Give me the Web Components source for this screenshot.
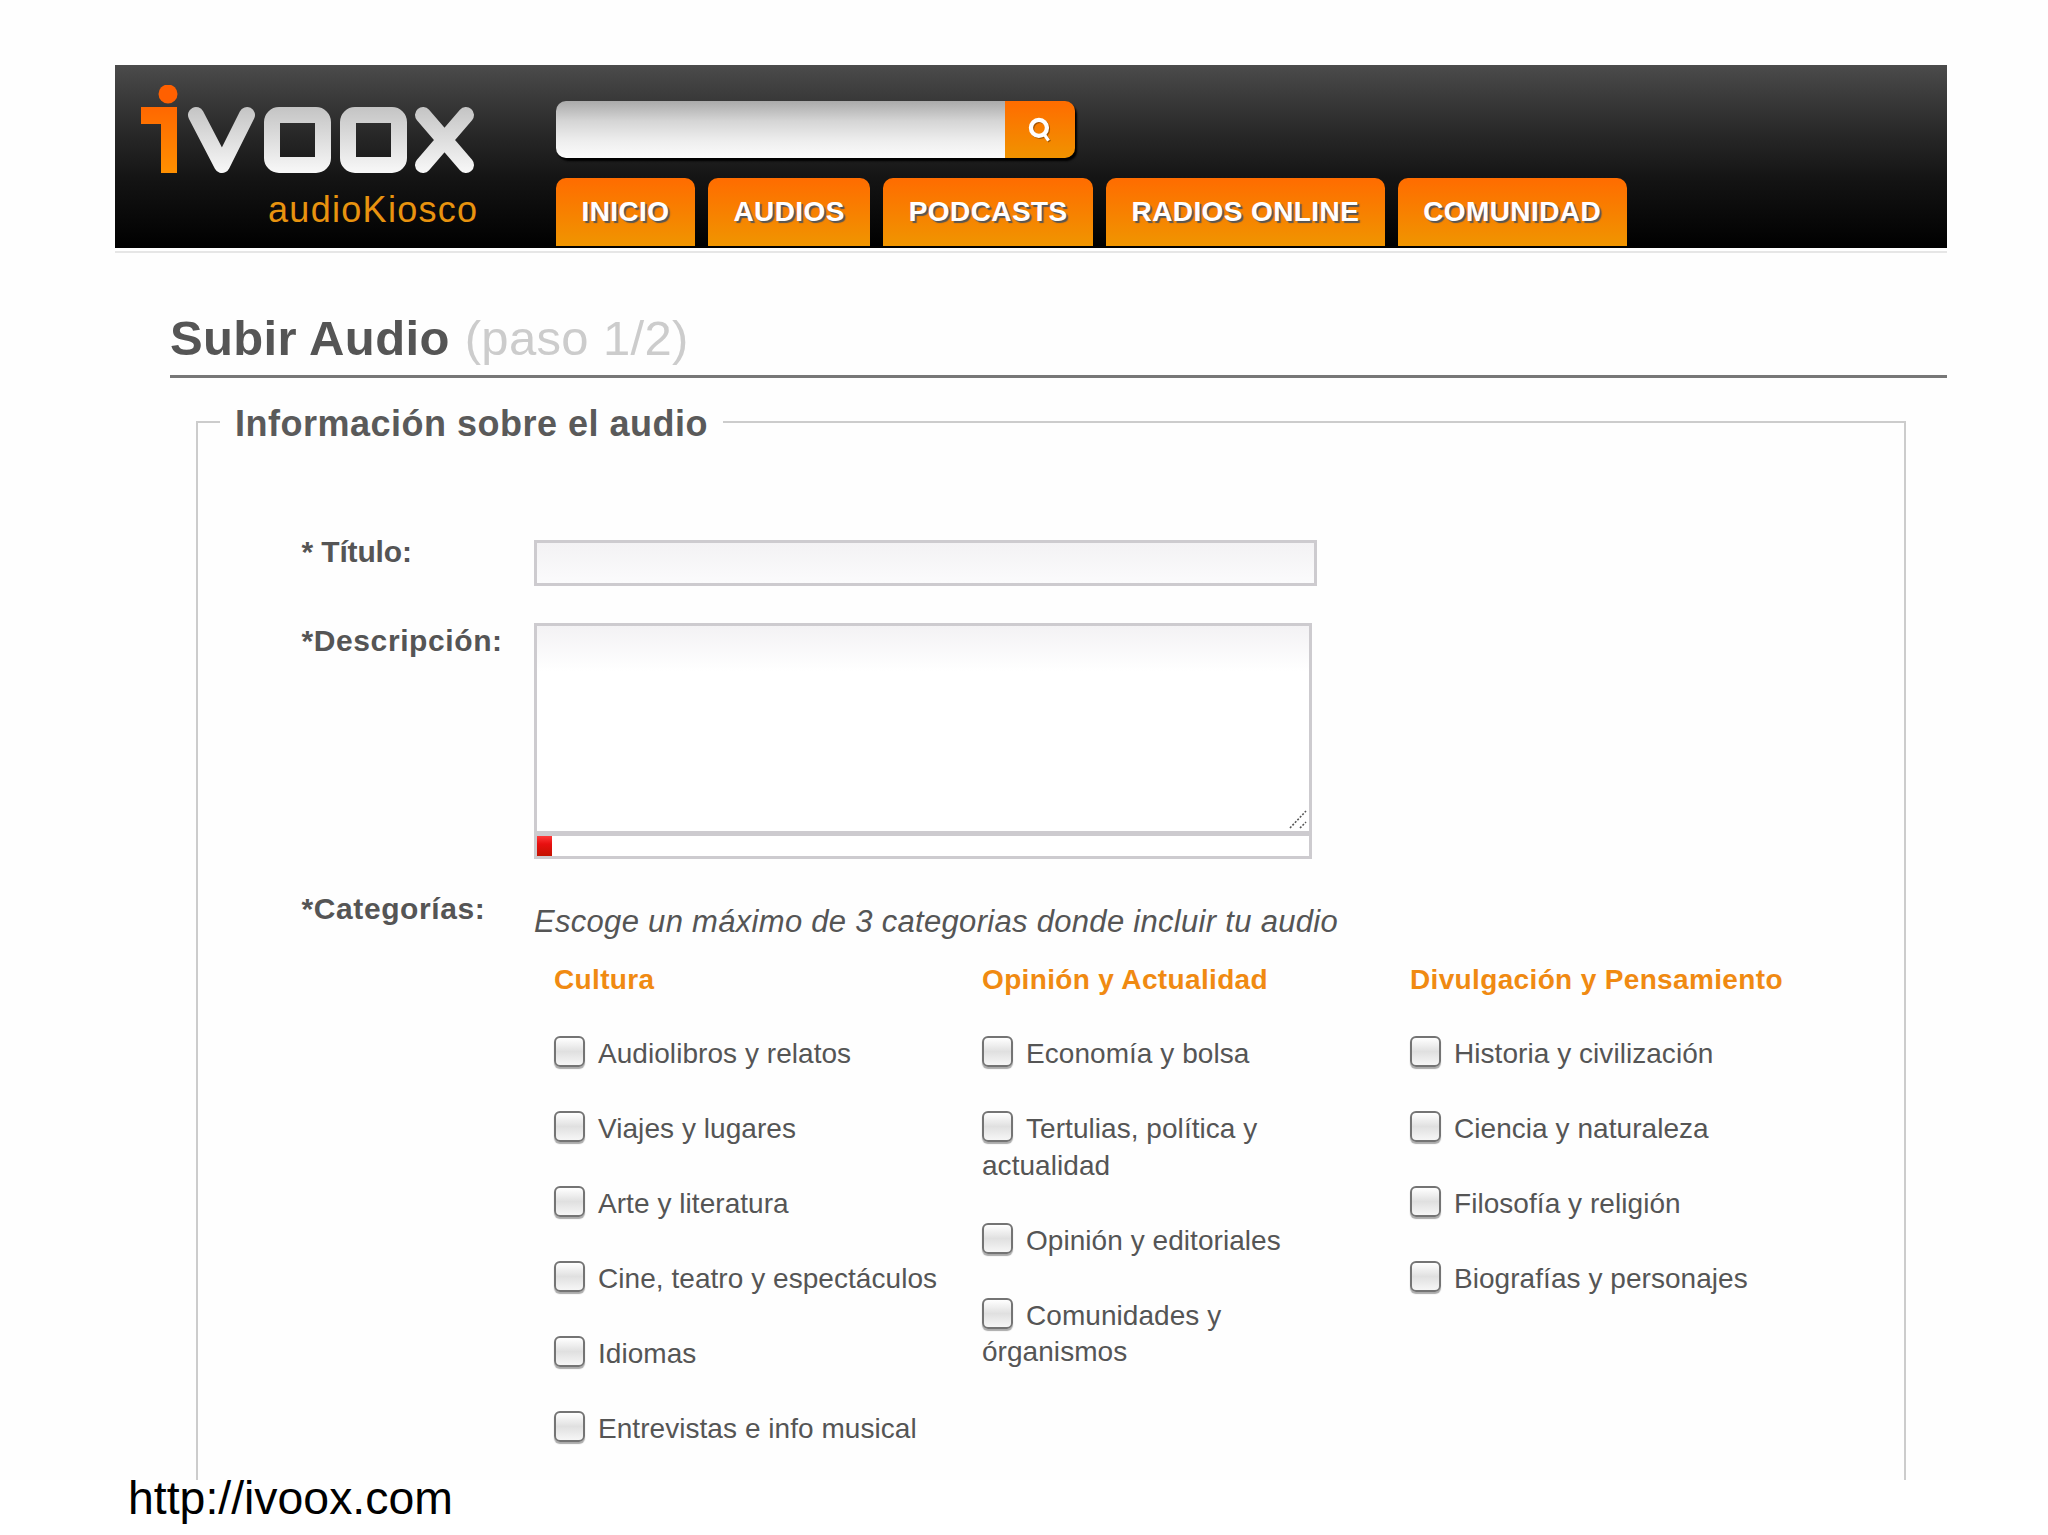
<!DOCTYPE html>
<html lang="es">
<head>
<meta charset="utf-8">
<title>iVoox</title>
<style>
html,body{margin:0;padding:0;background:#fff;font-family:"Liberation Sans",Arial,sans-serif;}
</style>
</head>
<body>
<iv-slide>
  <iv-header></iv-header>
  <iv-title step="(paso 1/2)">Subir Audio</iv-title>
  <iv-panel legend="Información sobre el audio">
    <iv-field label="* Título:" class="short"><iv-text-input></iv-text-input></iv-field>
    <iv-field label="*Descripción:"><iv-description></iv-description></iv-field>
    <iv-field label="*Categorías:" class="last">
      <iv-hint>Escoge un máximo de 3 categorias donde incluir tu audio</iv-hint>
      <iv-categories>
        <iv-category heading="Cultura">
          <iv-check>Audiolibros y relatos</iv-check>
          <iv-check>Viajes y lugares</iv-check>
          <iv-check>Arte y literatura</iv-check>
          <iv-check>Cine, teatro y espectáculos</iv-check>
          <iv-check>Idiomas</iv-check>
          <iv-check>Entrevistas e info musical</iv-check>
        </iv-category>
        <iv-category heading="Opinión y Actualidad">
          <iv-check>Economía y bolsa</iv-check>
          <iv-check>Tertulias, política y actualidad</iv-check>
          <iv-check>Opinión y editoriales</iv-check>
          <iv-check>Comunidades y órganismos</iv-check>
        </iv-category>
        <iv-category heading="Divulgación y Pensamiento">
          <iv-check>Historia y civilización</iv-check>
          <iv-check>Ciencia y naturaleza</iv-check>
          <iv-check>Filosofía y religión</iv-check>
          <iv-check>Biografías y personajes</iv-check>
        </iv-category>
      </iv-categories>
    </iv-field>
  </iv-panel>
  <iv-caption slot="caption">http://ivoox.com</iv-caption>
</iv-slide>
<script>
function def(name, css, html, init){
  customElements.define(name, class extends HTMLElement{
    connectedCallback(){
      if(this.shadowRoot) return;
      const r=this.attachShadow({mode:'open'});
      const h=typeof html==='function'?html(this):html;
      r.innerHTML='<style>'+css+'</style>'+h;
      if(init) init(this,r);
    }
  });
}
def('iv-slide',`
  :host{display:flex;flex-direction:column;width:2048px;height:1535px;overflow:hidden;background:#fff;box-sizing:border-box;}
  .main{height:1480px;overflow:hidden;padding-top:65px;box-sizing:border-box;flex:none;background:#fefefe;}
`,`<div class="main"><slot></slot></div><slot name="caption"></slot>`);

def('iv-header',`
  :host{display:flex;width:1832px;height:183px;margin-left:115px;box-sizing:border-box;padding-left:26px;background:linear-gradient(#4b4b4b,#2a2a2a 35%,#141414 62%,#000 100%);box-shadow:0 3px 0 #fff,0 5px 0 #e6e6e6;}
  .brand{width:415px;flex:none;display:flex;flex-direction:column;padding-top:20px;box-sizing:border-box;}
  svg.logo{display:block;width:335px;height:90px;}
  .sub{font:36px/34px "Liberation Sans",sans-serif;color:#e8930f;margin:18px 0 0 127px;letter-spacing:1.3px;white-space:nowrap;}
  .right{display:flex;flex-direction:column;padding-top:36px;gap:20px;}
  .search{display:flex;width:519px;height:57px;border-radius:10px;box-shadow:2px 3px 2px #000;}
  .q{width:449px;background:linear-gradient(#aaa,#d5d5d5 35%,#eee 70%,#fbfbfb);border-radius:10px 0 0 10px;}
  .go{width:70px;display:flex;align-items:center;justify-content:center;background:linear-gradient(#ff6c00,#f09300);border-radius:0 10px 10px 0;}
  nav{display:flex;gap:13px;}
`,`<div class="brand">
  <svg class="logo" viewBox="141 85 335 90" role="img" aria-label="ivoox">
    <defs>
      <linearGradient id="o" gradientUnits="userSpaceOnUse" x1="0" y1="85" x2="0" y2="173"><stop offset="0" stop-color="#ff5a00"/><stop offset="1" stop-color="#ff9000"/></linearGradient>
      <linearGradient id="w" gradientUnits="userSpaceOnUse" x1="0" y1="107" x2="0" y2="173"><stop offset="0" stop-color="#c4c4c4"/><stop offset="1" stop-color="#f8f8f8"/></linearGradient>
    </defs>
    <circle cx="168" cy="94" r="9.5" fill="#ff6000"/>
    <path d="M141 107H177V173H161V124H141Z" fill="url(#o)"/>
    <path d="M196 115L222 165L247 115" fill="none" stroke="url(#w)" stroke-width="16" stroke-linecap="round" stroke-linejoin="round"/>
    <rect x="272" y="115" width="51" height="50" rx="7" fill="none" stroke="url(#w)" stroke-width="16"/>
    <rect x="348" y="115" width="51" height="50" rx="7" fill="none" stroke="url(#w)" stroke-width="16"/>
    <path d="M423 115L466 165M466 115L423 165" fill="none" stroke="url(#w)" stroke-width="16" stroke-linecap="round"/>
  </svg>
  <div class="sub">audioKiosco</div>
</div>
<div class="right">
  <div class="search"><div class="q"></div><div class="go">
    <svg width="30" height="32" viewBox="0 0 28 30" aria-hidden="true">
      <g fill="none" stroke="#5a3000" stroke-opacity=".55" transform="translate(1 1)"><circle cx="13" cy="13" r="7.5" stroke-width="4"/><path d="M18 19L22 25" stroke-width="3"/></g>
      <g fill="none" stroke="#fff"><circle cx="13" cy="13" r="7.5" stroke-width="4"/><path d="M18 19L22 25" stroke-width="3"/></g>
    </svg></div></div>
  <nav>
    <iv-tab>INICIO</iv-tab><iv-tab>AUDIOS</iv-tab><iv-tab>PODCASTS</iv-tab><iv-tab>RADIOS ONLINE</iv-tab><iv-tab>COMUNIDAD</iv-tab>
  </nav>
</div>`);

def('iv-tab',`
  :host{display:flex;align-items:center;height:68px;padding:0 25.5px;box-sizing:border-box;border-radius:10px 10px 0 0;background:linear-gradient(#ff6c00,#f09500);color:#fff;font:bold 28px/1 "Liberation Sans",sans-serif;letter-spacing:.4px;text-shadow:2px 2px 1px #555;white-space:nowrap;}
`,`<slot></slot>`);

def('iv-title',`
  :host{display:block;margin:0 0 0 170px;width:1777px;}
  h1{margin:0;padding:62px 0 9px;border-bottom:3px solid #777;font:bold 49px/56px "Liberation Sans",sans-serif;color:#555;letter-spacing:.35px;}
  span{font-weight:normal;color:#ccc;margin-left:1px;}
`,t=>`<h1><slot></slot> <span>${t.getAttribute('step')}</span></h1>`);

def('iv-panel',`
  :host{display:block;margin:20px 0 0 196px;width:1710px;}
  fieldset{margin:0;padding:95px 0 100px 103.5px;border:2px solid #ccc;min-height:1100px;box-sizing:border-box;}
  legend{margin-left:-81.5px;padding:5px 15px 0;font:bold 36px/42px "Liberation Sans",sans-serif;color:#5a5a5a;letter-spacing:.5px;white-space:nowrap;}
`,t=>`<fieldset><legend>${t.getAttribute('legend')}</legend><slot></slot></fieldset>`);

def('iv-field',`
  :host{display:grid;grid-template-columns:232.5px 1fr;margin-bottom:37px;}
  :host(.short){margin-top:-6px;}
  :host(.short) .c{padding-top:6px;}
  :host(.short) .l{letter-spacing:-.15px;}
  :host(.last){margin-top:-5px;}
  .l{padding-top:1px;font:bold 30px/34px "Liberation Sans",sans-serif;color:#555;letter-spacing:.6px;white-space:nowrap;}
`,t=>`<div class="l">${t.getAttribute('label')}</div><div class="c"><slot></slot></div>`);

def('iv-text-input',`
  :host{display:block;}
  input{display:block;width:783px;height:46px;box-sizing:border-box;margin:0;border:3px solid #cdcbcf;border-radius:0;background:linear-gradient(#f3f2f4,#fbfbfc);outline:none;padding:0 6px;}
`,`<input type="text" aria-label="Título">`);

def('iv-description',`
  :host{display:block;position:relative;width:778px;}
  textarea{display:block;width:778px;height:213px;box-sizing:border-box;margin:0;padding:6px;resize:none;border:3px solid #cdcbcf;border-bottom-width:5px;border-radius:0;outline:none;background:linear-gradient(#f3f2f4,#fff 22%);}
  .count{height:23px;box-sizing:border-box;border:3px solid #cdcbcf;border-top:0;background:#fff;}
  .bar{width:15px;height:20px;background:linear-gradient(#ff3a3a,#e81010 40%,#c41200);}
  svg{position:absolute;right:5px;top:187px;}
`,`<textarea aria-label="Descripción"></textarea>
<div class="count"><div class="bar"></div></div>
<svg width="18" height="19" viewBox="0 0 18 19" aria-hidden="true"><path d="M1 18L17 1M11 18L17 12" stroke="#555" stroke-width="1.6" stroke-dasharray="2 1.6" fill="none"/></svg>`);

def('iv-hint',`
  :host{display:block;margin-top:14px;font:italic 31px/34px "Liberation Sans",sans-serif;color:#555;letter-spacing:.3px;white-space:nowrap;}
`,`<slot></slot>`);

def('iv-categories',`
  :host{display:grid;grid-template-columns:repeat(3,428px);margin:24px 0 0 20px;}
`,`<slot></slot>`);

def('iv-category',`
  :host{display:block;}
  h3{margin:0 0 39px;font:bold 28px/34px "Liberation Sans",sans-serif;color:#f08a12;letter-spacing:.35px;white-space:nowrap;}
`,t=>`<h3>${t.getAttribute('heading')}</h3><slot></slot>`);

def('iv-check',`
  :host{display:block;width:388px;margin-bottom:38.5px;font:28px/36.5px "Liberation Sans",sans-serif;color:#555;letter-spacing:.05px;}
  input{appearance:none;-webkit-appearance:none;display:inline-block;vertical-align:-4px;width:31px;height:31px;box-sizing:border-box;margin:0 13px 0 0;border:2px solid #747474;border-radius:6px;background:linear-gradient(#fff,#e0e0e0 50%,#f6f6f6);box-shadow:0 2px 1px #aaa;}
`,`<input type="checkbox"><slot></slot>`);

def('iv-caption',`
  :host{display:block;flex:none;height:55px;box-sizing:border-box;padding-left:128px;background:#fff;font:46.4px/37px "Liberation Sans",sans-serif;color:#000;white-space:nowrap;}
`,`<slot></slot>`);
</script>
</body>
</html>
